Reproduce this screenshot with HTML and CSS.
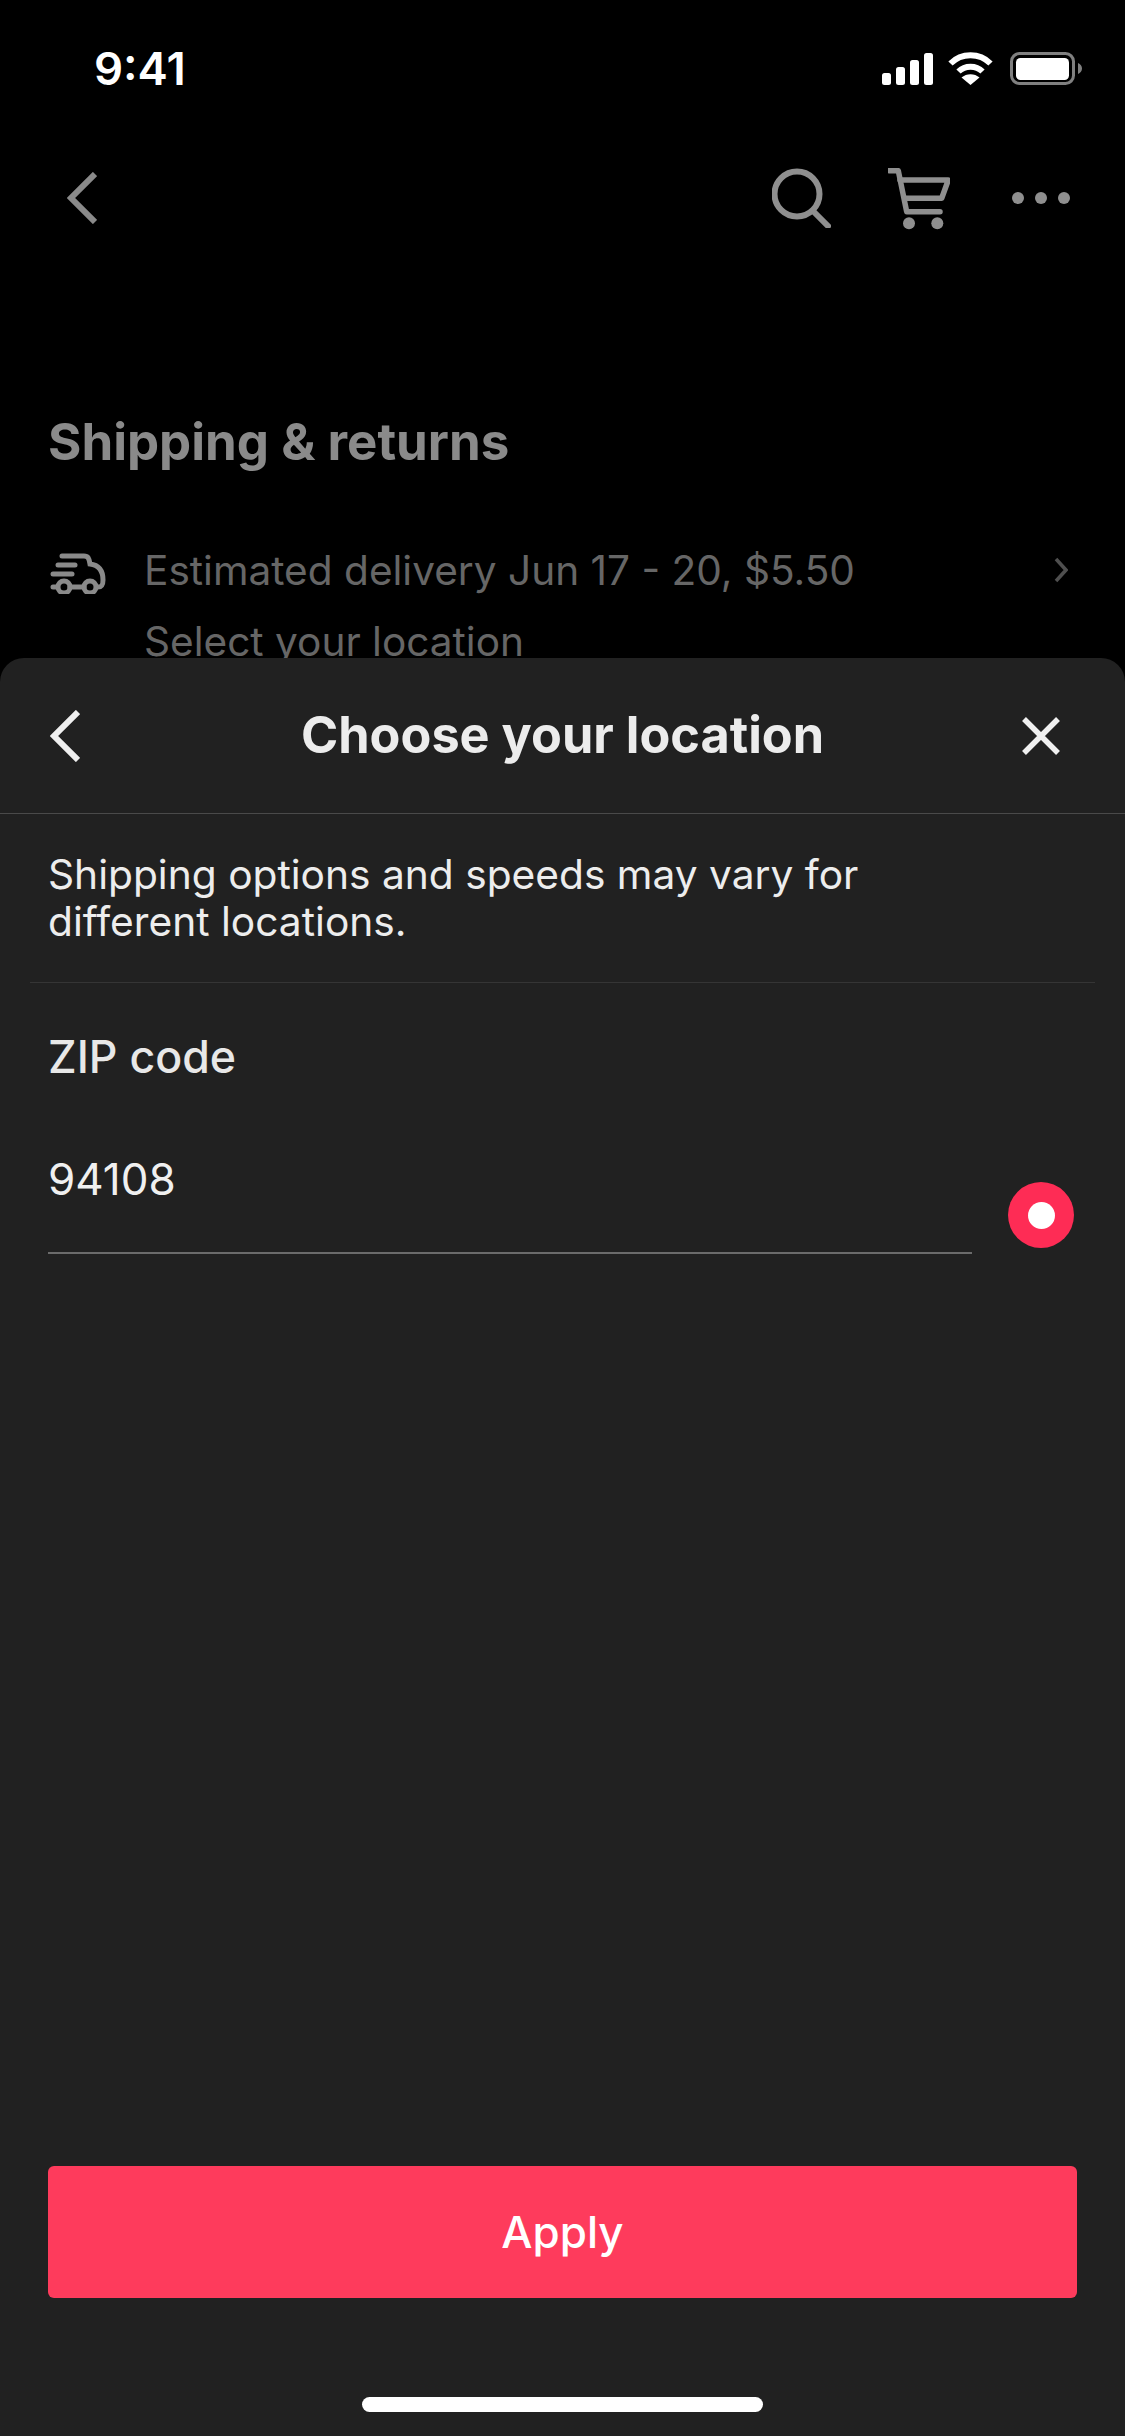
FILE: index.html
```html
<!DOCTYPE html>
<html lang="en">
<head>
    <meta charset="UTF-8">
    <meta name="viewport" content="width=device-width, initial-scale=1.0">
    <title>Choose your location</title>
    <link rel="stylesheet" href="styles.css">
</head>
<body>

<div class="page">
    <div class="behind">
        <div class="status-bar">
            <span class="time">9:41</span>
            <div class="status-icons">
                <svg class="signal" width="51" height="32" viewBox="0 0 51 32" fill="#fff">
                    <rect x="0" y="20" width="9" height="12" rx="2.5"/>
                    <rect x="14" y="14" width="9" height="18" rx="2.5"/>
                    <rect x="28" y="7" width="9" height="25" rx="2.5"/>
                    <rect x="42" y="0" width="9" height="32" rx="2.5"/>
                </svg>
                <svg class="wifi" width="45" height="33" viewBox="0 0 45 33" fill="none" stroke="#fff" stroke-width="6">
                    <path d="M2.5 11.5C13.5 0.5 31.500 0.500 42.500 11.500"/>
                    <path d="M10.500 19.500C17 13 28 13 34.500 19.500"/>
                    <path d="M22.500 33L13.500 25.500C18.500 21 26.500 21 31.500 25.500Z" fill="#fff" stroke="none"/>
                </svg>
                <svg class="battery" width="72" height="33" viewBox="0 0 72 33">
                    <rect x="1.500" y="1.500" width="62" height="30" rx="8" fill="none" stroke="#808080" stroke-width="3"/>
                    <rect x="6" y="6" width="53" height="22" rx="4.500" fill="#fff"/>
                    <path d="M68 11C70.500 12 72 14 72 16.500C72 19 70.500 21 68 22Z" fill="#808080"/>
                </svg>
            </div>
        </div>

        <div class="top-nav">
            <svg class="nav-back" width="30" height="52" viewBox="0 0 30 52" fill="none" stroke="#8a8a8a" stroke-width="6">
                <path d="M28 2L4 26L28 50"/>
            </svg>
            <div class="nav-actions">
                <svg width="59" height="60" viewBox="0 0 59 60" fill="none" stroke="#8f8f8f" stroke-width="6">
                    <circle cx="25" cy="26" r="22.500"/>
                    <path d="M41 43L56 58" stroke-linecap="round"/>
                </svg>
                <svg width="62" height="62" viewBox="0 0 62 62" fill="none" stroke="#8f8f8f" stroke-width="5.500" stroke-linejoin="round" stroke-linecap="round">
                    <path d="M1 2.700H10.300L18.700 43.700H52"/>
                    <path d="M12 12H60.300L53.700 30.300H17"/>
                    <circle cx="21" cy="55.300" r="6" fill="#8f8f8f" stroke="none"/>
                    <circle cx="49.300" cy="55.300" r="6" fill="#8f8f8f" stroke="none"/>
                </svg>
                <div class="dots">
                    <span></span><span></span><span></span>
                </div>
            </div>
        </div>

        <h2 class="section-title">Shipping &amp; returns</h2>

        <div class="delivery-row">
            <svg class="truck" width="60" height="44" viewBox="0 0 60 44" fill="none" stroke="#8a8a8a" stroke-width="5" stroke-linecap="round">
                <path d="M14 6H36C40 6 41 8 42 14C50 15 55 20 55 30C55 35 54 37 50 37"/>
                <path d="M10 15H27"/>
                <path d="M5 24H24"/>
                <path d="M5 37H9M22 37H36"/>
                <circle cx="16" cy="37" r="6"/>
                <circle cx="42" cy="37" r="6"/>
            </svg>
            <span class="delivery-text">Estimated delivery Jun 17 - 20, $5.50</span>
            <svg class="row-arrow" width="14" height="26" viewBox="0 0 14 26" fill="none" stroke="#4f4f4f" stroke-width="3.500">
                <path d="M2 2L12 13L2 24"/>
            </svg>
        </div>
        <div class="delivery-sub">Select your location</div>
    </div>

    <div class="sheet">
        <div class="sheet-header">
            <svg class="sheet-back" width="30" height="52" viewBox="0 0 30 52" fill="none" stroke="#f0f0f0" stroke-width="6">
                <path d="M28 2L4 26L28 50"/>
            </svg>
            <h1>Choose your location</h1>
            <svg class="sheet-close" width="38" height="38" viewBox="0 0 38 38" fill="none" stroke="#f0f0f0" stroke-width="5.500">
                <path d="M2 2L36 36M36 2L2 36"/>
            </svg>
        </div>

        <p class="sheet-note">Shipping options and speeds may vary for different locations.</p>

        <div class="zip-block">
            <div class="zip-label">ZIP code</div>
            <div class="zip-row">
                <div class="zip-field">94108</div>
                <div class="radio"><span></span></div>
            </div>
        </div>

        <div class="sheet-footer">
            <button class="apply-btn">Apply</button>
            <div class="home-bar"></div>
        </div>
    </div>
</div>

</body>
</html>
```

FILE: styles.css
```css
* {
    box-sizing: border-box;
}
body {
    margin: 0;
    background-color: #000;
    font-family: Inter, "Liberation Sans", sans-serif;
}
.page {
    width: 1125px;
    height: 2436px;
    display: flex;
    flex-direction: column;
    overflow: hidden;
}

/* dimmed product page */
.behind {
    height: 658px;
    flex: none;
    overflow: hidden;
}
.status-bar {
    height: 136px;
    display: flex;
    justify-content: space-between;
    padding: 41px 43px 0 94px;
}
.time {
    color: #fff;
    font-size: 45.5px;
    font-weight: 600;
    line-height: 56px;
}
.status-icons {
    display: flex;
    align-items: flex-end;
    gap: 15px;
    height: 44px;
    padding-top: 11px;
}
.battery {
    margin-left: 2px;
}
.top-nav {
    height: 100px;
    display: flex;
    justify-content: space-between;
    padding: 32px 55px 0 67px;
}
.nav-back {
    margin-top: 4px;
}
.nav-actions {
    display: flex;
    align-items: flex-start;
    gap: 57px;
}
.dots {
    display: flex;
    gap: 11px;
    margin-left: 5px;
    padding-top: 24px;
}
.dots span {
    width: 12px;
    height: 12px;
    border-radius: 50%;
    background-color: #8f8f8f;
}
.section-title {
    margin: 0;
    padding: 176px 0 0 48px;
    color: #8a8a8a;
    font-size: 51px;
    font-weight: 700;
    line-height: 60px;
}
.delivery-row {
    display: flex;
    align-items: center;
    margin-top: 70px;
    padding: 0 57px 0 48px;
    height: 56px;
}
.truck {
    flex: none;
    margin: 4px 36px 0 0;
}
.delivery-text {
    flex: 1;
    color: #666;
    font-size: 40.6px;
}
.delivery-sub {
    padding: 16px 0 0 144px;
    color: #666;
    font-size: 40.6px;
    line-height: 56px;
}

/* bottom sheet */
.sheet {
    flex: 1;
    display: flex;
    flex-direction: column;
    background-color: #212121;
    border-radius: 24px 24px 0 0;
}
.sheet-header {
    height: 156px;
    flex: none;
    display: grid;
    grid-template-columns: 1fr auto 1fr;
    align-items: center;
    padding: 0 50px;
    border-bottom: 1px solid #4a4a4a;
}
.sheet-close {
    justify-self: end;
    margin-right: 15px;
}
.sheet-header h1 {
    margin: 0 0 3px;
    color: #ececec;
    font-size: 50.4px;
    font-weight: 700;
}
.sheet-note {
    margin: 0 30px;
    padding: 37px 120px 37px 18px;
    border-bottom: 1px solid #353535;
    color: #ededed;
    font-size: 40.7px;
    line-height: 47px;
}
.zip-block {
    padding: 48px 51px 0 48px;
}
.zip-label {
    color: #e8e8e8;
    font-size: 44.7px;
    font-weight: 500;
    line-height: 52px;
}
.zip-row {
    display: flex;
    align-items: flex-end;
    justify-content: space-between;
}
.zip-field {
    width: 924px;
    height: 171px;
    padding-top: 68px;
    border-bottom: 2px solid #6b6b6b;
    color: #f0f0f0;
    font-size: 44px;
    line-height: 56px;
}
.radio {
    width: 66px;
    height: 66px;
    margin-bottom: 6px;
    display: flex;
    align-items: center;
    justify-content: center;
    border-radius: 50%;
    background-color: #fe2c55;
}
.radio span {
    width: 27px;
    height: 27px;
    border-radius: 50%;
    background-color: #fff;
}
.sheet-footer {
    margin-top: auto;
    padding: 0 48px 24px;
    display: flex;
    flex-direction: column;
    align-items: center;
}
.apply-btn {
    width: 100%;
    height: 132px;
    border: none;
    border-radius: 6px;
    background-color: #fe3b5c;
    color: #fff;
    font-family: inherit;
    font-size: 44px;
    font-weight: 500;
}
.home-bar {
    width: 401px;
    height: 15px;
    margin-top: 99px;
    border-radius: 8px;
    background-color: #fff;
}
```
